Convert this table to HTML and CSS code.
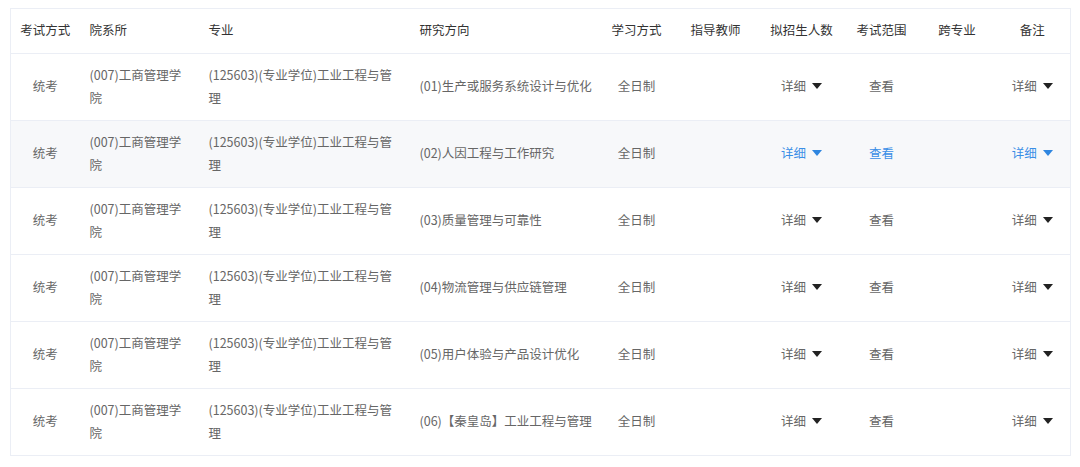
FILE: index.html
```html
<!DOCTYPE html>
<html lang="zh-CN">
<head>
<meta charset="utf-8">
<title>招生专业目录</title>
<link rel="stylesheet" href="styles.css">
</head>
<body>
<div class="wrap">
<table class="tbl">
  <colgroup>
    <col class="c1"><col class="c2"><col class="c3"><col class="c4"><col class="c5">
    <col class="c6"><col class="c7"><col class="c8"><col class="c9"><col class="c10">
  </colgroup>
  <thead>
    <tr>
      <th class="ctr">考试方式</th>
      <th>院系所</th>
      <th>专业</th>
      <th>研究方向</th>
      <th class="ctr">学习方式</th>
      <th class="ctr">指导教师</th>
      <th class="ctr">拟招生人数</th>
      <th class="ctr">考试范围</th>
      <th class="ctr">跨专业</th>
      <th class="ctr">备注</th>
    </tr>
  </thead>
  <tbody>
    <tr>
      <td class="ctr">统考</td>
      <td>(007)工商管理学院</td>
      <td>(125603)(专业学位)工业工程与管理</td>
      <td>(01)生产或服务系统设计与优化</td>
      <td class="ctr">全日制</td>
      <td class="ctr"></td>
      <td class="ctr"><span class="dd">详细<i class="caret"></i></span></td>
      <td class="ctr"><span class="lnk">查看</span></td>
      <td class="ctr"></td>
      <td class="ctr"><span class="dd">详细<i class="caret"></i></span></td>
    </tr>
    <tr class="hover">
      <td class="ctr">统考</td>
      <td>(007)工商管理学院</td>
      <td>(125603)(专业学位)工业工程与管理</td>
      <td>(02)人因工程与工作研究</td>
      <td class="ctr">全日制</td>
      <td class="ctr"></td>
      <td class="ctr"><span class="dd">详细<i class="caret"></i></span></td>
      <td class="ctr"><span class="lnk">查看</span></td>
      <td class="ctr"></td>
      <td class="ctr"><span class="dd">详细<i class="caret"></i></span></td>
    </tr>
    <tr>
      <td class="ctr">统考</td>
      <td>(007)工商管理学院</td>
      <td>(125603)(专业学位)工业工程与管理</td>
      <td>(03)质量管理与可靠性</td>
      <td class="ctr">全日制</td>
      <td class="ctr"></td>
      <td class="ctr"><span class="dd">详细<i class="caret"></i></span></td>
      <td class="ctr"><span class="lnk">查看</span></td>
      <td class="ctr"></td>
      <td class="ctr"><span class="dd">详细<i class="caret"></i></span></td>
    </tr>
    <tr>
      <td class="ctr">统考</td>
      <td>(007)工商管理学院</td>
      <td>(125603)(专业学位)工业工程与管理</td>
      <td>(04)物流管理与供应链管理</td>
      <td class="ctr">全日制</td>
      <td class="ctr"></td>
      <td class="ctr"><span class="dd">详细<i class="caret"></i></span></td>
      <td class="ctr"><span class="lnk">查看</span></td>
      <td class="ctr"></td>
      <td class="ctr"><span class="dd">详细<i class="caret"></i></span></td>
    </tr>
    <tr>
      <td class="ctr">统考</td>
      <td>(007)工商管理学院</td>
      <td>(125603)(专业学位)工业工程与管理</td>
      <td>(05)用户体验与产品设计优化</td>
      <td class="ctr">全日制</td>
      <td class="ctr"></td>
      <td class="ctr"><span class="dd">详细<i class="caret"></i></span></td>
      <td class="ctr"><span class="lnk">查看</span></td>
      <td class="ctr"></td>
      <td class="ctr"><span class="dd">详细<i class="caret"></i></span></td>
    </tr>
    <tr>
      <td class="ctr">统考</td>
      <td>(007)工商管理学院</td>
      <td>(125603)(专业学位)工业工程与管理</td>
      <td>(06)【秦皇岛】工业工程与管理</td>
      <td class="ctr">全日制</td>
      <td class="ctr"></td>
      <td class="ctr"><span class="dd">详细<i class="caret"></i></span></td>
      <td class="ctr"><span class="lnk">查看</span></td>
      <td class="ctr"></td>
      <td class="ctr"><span class="dd">详细<i class="caret"></i></span></td>
    </tr>
  </tbody>
</table>
</div>
</body>
</html>
```
FILE: styles.css
```css
html, body {
  margin: 0;
  padding: 0;
  background: #fff;
}
body {
  font-family: "Noto Sans CJK SC", "Liberation Sans", sans-serif;
  font-size: 12.5px;
  color: #666;
}
.wrap {
  padding: 8px 0 0 10px;
}
.tbl {
  width: 1061px;
  table-layout: fixed;
  border-collapse: collapse;
  border: 1px solid #ebeef5;
}
.c1 { width: 69px; }
.c2 { width: 119px; }
.c3 { width: 211px; }
.c4 { width: 192px; }
.c5 { width: 70px; }
.c6 { width: 88px; }
.c7 { width: 84px; }
.c8 { width: 76px; }
.c9 { width: 75px; }
.c10 { width: 76px; }

.tbl th {
  height: 41px;
  padding: 0 8px 3px 10px;
  text-align: left;
  font-weight: normal;
  color: #333;
  border-bottom: 1px solid #ebeef5;
  white-space: nowrap;
}
.tbl td {
  height: 63px;
  padding: 0 6px 3px 10px;
  line-height: 23px;
  border-bottom: 1px solid #ebeef5;
  vertical-align: middle;
}
.tbl th.ctr {
  text-align: center;
  padding: 0 0 3px;
}
.tbl td.ctr {
  text-align: center;
  padding: 0 0 3px;
}
.tbl tr.hover td {
  background: #f7f8fa;
}
.dd, .lnk {
  white-space: nowrap;
}
.caret {
  display: inline-block;
  width: 0;
  height: 0;
  margin-left: 6px;
  border-left: 5px solid transparent;
  border-right: 5px solid transparent;
  border-top: 6px solid #222;
  vertical-align: 2px;
}
.hover .dd, .hover .lnk {
  color: #3a8ee6;
}
.hover .caret {
  border-top-color: #2f86e0;
}
```
